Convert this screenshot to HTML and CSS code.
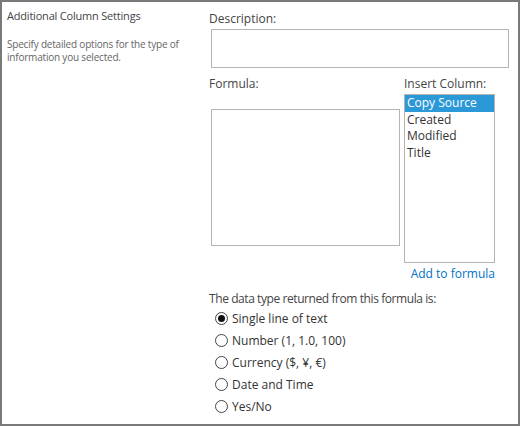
FILE: index.html
```html
<!DOCTYPE html>
<html lang="en">
<head>
<meta charset="utf-8">
<title>Additional Column Settings</title>
<link rel="stylesheet" href="styles.css">
</head>
<body>
<div class="frame">
  <section class="left">
    <h3 class="sec-title">Additional Column Settings</h3>
    <p class="sec-desc">Specify detailed options for the type of information you selected.</p>
  </section>
  <section class="right">
    <div class="lbl">Description:</div>
    <div class="textbox desc-box"></div>
    <div class="formula-row">
      <div class="formula-col">
        <div class="lbl">Formula:</div>
        <div class="textbox formula-box"></div>
      </div>
      <div class="insert-col">
        <div class="lbl">Insert Column:</div>
        <ul class="listbox">
          <li class="selected">Copy Source</li>
          <li>Created</li>
          <li>Modified</li>
          <li>Title</li>
        </ul>
        <a class="add-link">Add to formula</a>
      </div>
    </div>
    <div class="lbl type-lbl">The data type returned from this formula is:</div>
    <ul class="radios">
      <li><span class="radio checked"></span>Single line of text</li>
      <li><span class="radio"></span>Number (1, 1.0, 100)</li>
      <li><span class="radio"></span>Currency ($, ¥, €)</li>
      <li><span class="radio"></span>Date and Time</li>
      <li><span class="radio"></span>Yes/No</li>
    </ul>
  </section>
</div>
</body>
</html>
```

FILE: styles.css
```css
body {
  margin: 0;
  font-family: "Open Sans", "Noto Sans", sans-serif;
  background: #fff;
}
.frame {
  width: 520px;
  height: 426px;
  box-sizing: border-box;
  border: 2px solid #7a7a7a;
  display: flex;
  background: #fff;
}
.left {
  width: 207px;
  box-sizing: border-box;
  padding: 7px 0 0 5px;
}
.sec-title {
  margin: 0;
  font-size: 11px;
  line-height: 14px;
  font-weight: normal;
  color: #444;
  letter-spacing: -0.2px;
}
.sec-desc {
  margin: 15px 0 0;
  font-size: 10px;
  line-height: 12.5px;
  color: #666;
  max-width: 190px;
  letter-spacing: -0.2px;
}
.right {
  flex: 1;
  padding-top: 8px;
}
.lbl {
  font-size: 12px;
  line-height: 17px;
  color: #444;
}
.textbox {
  border: 1px solid #b4b4b4;
  box-sizing: border-box;
  background: #fff;
}
.desc-box {
  margin: 2px 0 0 2px;
  width: 298px;
  height: 39px;
}
.formula-row {
  display: flex;
  margin-top: 7px;
}
.formula-col {
  width: 195px;
}
.formula-box {
  margin: 17px 0 0 2px;
  width: 189px;
  height: 137px;
}
.insert-col {
  width: 91px;
}
.listbox {
  margin: 2px 0 0;
  padding: 0;
  list-style: none;
  border: 1px solid #b4b4b4;
  height: 169px;
  box-sizing: border-box;
  font-size: 12px;
  line-height: 16.5px;
  color: #333;
}
.listbox li {
  padding-left: 2px;
}
.listbox .selected {
  background: #2b98d8;
  color: #fff;
}
.add-link {
  display: block;
  text-align: right;
  color: #0072c6;
  margin-top: 2px;
  font-size: 12px;
  line-height: 17px;
}
.type-lbl {
  margin-top: 8px;
  letter-spacing: -0.42px;
}
.radios {
  list-style: none;
  margin: 0;
  padding: 0 0 0 6px;
  font-size: 12px;
  color: #333;
}
.radios li {
  display: flex;
  align-items: center;
  height: 22px;
  gap: 4px;
}
.radio {
  width: 13px;
  height: 13px;
  border: 1px solid #444;
  border-radius: 50%;
  box-sizing: border-box;
  display: flex;
  align-items: center;
  justify-content: center;
  flex: none;
}
.radio.checked::after {
  content: "";
  width: 7px;
  height: 7px;
  border-radius: 50%;
  background: #111;
}
```
